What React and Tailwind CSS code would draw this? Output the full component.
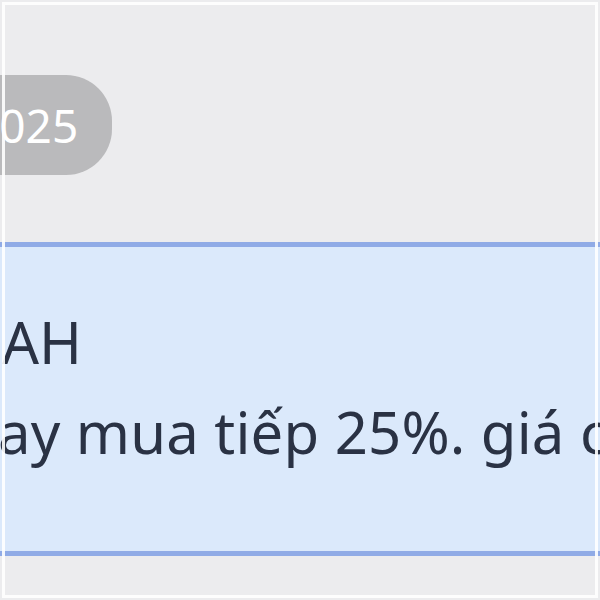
export default function App() {
  return (
    <div
      className="relative w-[600px] h-[600px] overflow-hidden bg-[#ececee]"
      style={{ fontFamily: '"Noto Sans", "Open Sans", sans-serif' }}
    >
      <div className="pt-[75px]">
        <div className="flex">
          <div className="ml-[-39px] h-[100px] pl-[12px] pr-[34px] rounded-r-[46px] bg-[#bababc] flex items-center">
            <span className="text-[46px] leading-none text-white">2025</span>
          </div>
        </div>
      </div>

      <div className="mt-[67px] h-[314px] border-y-[5px] border-[#90abe6] bg-[#dbe9fb] text-[#2a3244]">
        <div className="pt-[50px] whitespace-nowrap text-[58px] leading-[90px]">
          <div className="ml-[2px]">AH</div>
          <div className="ml-[-2px] tracking-[0.2px]">ay mua tiếp 25%. giá cả</div>
        </div>
      </div>

      <div className="pointer-events-none absolute inset-[2px] border-[3px] border-white/90" />
    </div>
  );
}
